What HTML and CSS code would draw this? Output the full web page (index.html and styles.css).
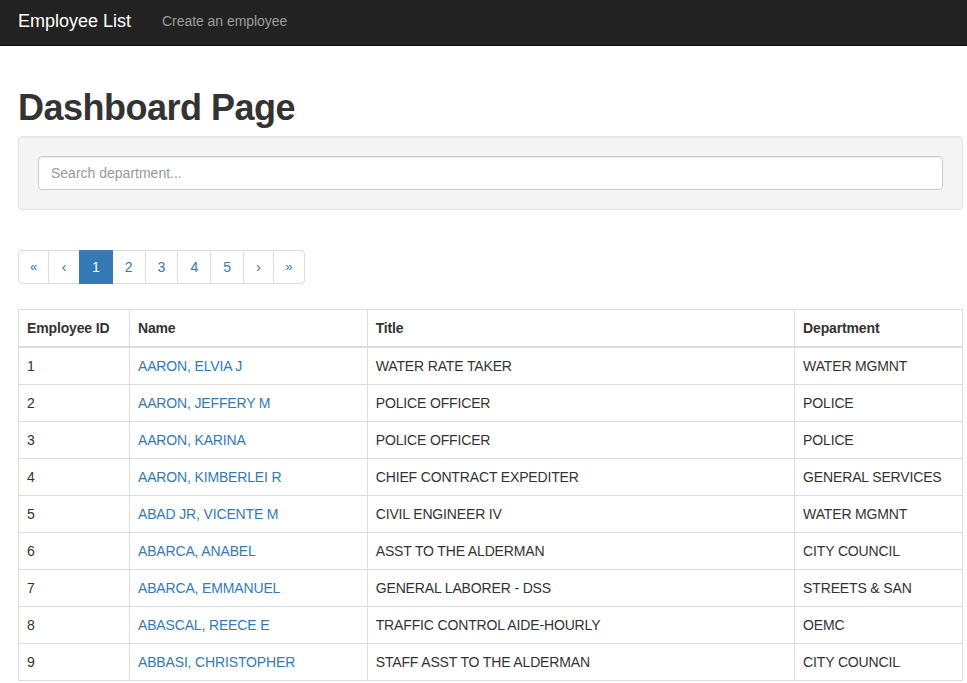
FILE: index.html
```html
<!DOCTYPE html>
<html lang="en">
<head>
<meta charset="utf-8">
<title>Dashboard Page</title>
<link rel="stylesheet" href="styles.css">
</head>
<body>
<nav class="navbar">
  <a class="brand" href="#">Employee List</a>
  <a class="nav-link" href="#">Create an employee</a>
</nav>
<main class="container">
  <h1 class="page-title">Dashboard Page</h1>
  <div class="well">
    <input class="form-control" type="text" placeholder="Search department...">
  </div>
  <ul class="pagination">
    <li class="first"><a href="#">&laquo;</a></li>
    <li class="prev"><a href="#">&lsaquo;</a></li>
    <li class="active"><a href="#">1</a></li>
    <li><a href="#">2</a></li>
    <li><a href="#">3</a></li>
    <li><a href="#">4</a></li>
    <li><a href="#">5</a></li>
    <li class="next"><a href="#">&rsaquo;</a></li>
    <li class="last"><a href="#">&raquo;</a></li>
  </ul>
  <table class="table">
    <colgroup>
      <col class="c-id"><col class="c-name"><col class="c-title"><col class="c-dept">
    </colgroup>
    <thead>
      <tr><th>Employee ID</th><th>Name</th><th>Title</th><th>Department</th></tr>
    </thead>
    <tbody>
      <tr><td>1</td><td><a href="#">AARON, ELVIA J</a></td><td>WATER RATE TAKER</td><td>WATER MGMNT</td></tr>
      <tr><td>2</td><td><a href="#">AARON, JEFFERY M</a></td><td>POLICE OFFICER</td><td>POLICE</td></tr>
      <tr><td>3</td><td><a href="#">AARON, KARINA</a></td><td>POLICE OFFICER</td><td>POLICE</td></tr>
      <tr><td>4</td><td><a href="#">AARON, KIMBERLEI R</a></td><td>CHIEF CONTRACT EXPEDITER</td><td>GENERAL SERVICES</td></tr>
      <tr><td>5</td><td><a href="#">ABAD JR, VICENTE M</a></td><td>CIVIL ENGINEER IV</td><td>WATER MGMNT</td></tr>
      <tr><td>6</td><td><a href="#">ABARCA, ANABEL</a></td><td>ASST TO THE ALDERMAN</td><td>CITY COUNCIL</td></tr>
      <tr><td>7</td><td><a href="#">ABARCA, EMMANUEL</a></td><td>GENERAL LABORER - DSS</td><td>STREETS &amp; SAN</td></tr>
      <tr><td>8</td><td><a href="#">ABASCAL, REECE E</a></td><td>TRAFFIC CONTROL AIDE-HOURLY</td><td>OEMC</td></tr>
      <tr><td>9</td><td><a href="#">ABBASI, CHRISTOPHER</a></td><td>STAFF ASST TO THE ALDERMAN</td><td>CITY COUNCIL</td></tr>
    </tbody>
  </table>
</main>
</body>
</html>
```
FILE: styles.css
```css
* { box-sizing: border-box; }
html, body { margin: 0; padding: 0; }
body {
  font-family: "Liberation Sans", Arial, Helvetica, sans-serif;
  font-size: 14px;
  line-height: 20px;
  color: #333;
  background: #fff;
}
a { color: #337ab7; text-decoration: none; }

.navbar {
  height: 46px;
  background: #222;
  border-bottom: 1px solid #080808;
  display: flex;
  align-items: center;
  padding: 0 0 3px 18px;
  gap: 31px;
}
.brand {
  color: #fff;
  font-size: 18px;
  line-height: 20px;
}
.nav-link {
  color: #9d9d9d;
  font-size: 14px;
  letter-spacing: -0.05px;
}

.container {
  padding-left: 18px;
  width: 963px;
}
.page-title {
  font-size: 36px;
  font-weight: bold;
  letter-spacing: -0.5px;
  line-height: 40px;
  margin: 42px 0 8px;
  color: #333;
}
.well {
  background: #f5f5f5;
  border: 1px solid #e3e3e3;
  border-radius: 4px;
  box-shadow: inset 0 1px 1px rgba(0,0,0,.05);
  padding: 19px;
  margin-bottom: 40px;
}
.form-control {
  display: block;
  width: 100%;
  height: 34px;
  padding: 6px 12px;
  font-family: inherit;
  font-size: 14px;
  color: #555;
  background: #fff;
  border: 1px solid #ccc;
  border-radius: 4px;
  box-shadow: inset 0 1px 1px rgba(0,0,0,.075);
  outline: none;
}
.form-control::placeholder { color: #999; }

.pagination {
  list-style: none;
  margin: 0 0 25px;
  padding: 0;
  display: flex;
}
.pagination li a {
  display: block;
  padding: 6px 12px;
  line-height: 20px;
  border: 1px solid #ddd;
  margin-left: -1px;
  background: #fff;
  color: #337ab7;
  text-align: center;
}
.pagination li.first a,
.pagination li.prev a,
.pagination li.next a,
.pagination li.last a { padding-left: 0; padding-right: 0; }
.pagination li.first a { width: 31px; font-size: 13px; }
.pagination li.prev a { width: 32px; font-size: 15px; }
.pagination li.next a { width: 31px; font-size: 15px; }
.pagination li.last a { width: 32px; font-size: 13px; }
.pagination li:first-child a {
  margin-left: 0;
  border-radius: 4px 0 0 4px;
}
.pagination li:last-child a { border-radius: 0 4px 4px 0; }
.pagination li.active a {
  background: #337ab7;
  border-color: #337ab7;
  color: #fff;
  position: relative;
}

.table {
  width: 945px;
  border-collapse: collapse;
  border: 1px solid #ddd;
}
.c-id { width: 111px; }
.c-name { width: 238px; }
.c-title { width: 428px; }
.c-dept { width: 168px; }
.table th, .table td {
  border: 1px solid #ddd;
  padding: 8px;
  line-height: 20px;
  text-align: left;
  vertical-align: top;
  letter-spacing: -0.15px;
}
.table th {
  font-weight: bold;
  border-bottom: 2px solid #ddd;
}
```
